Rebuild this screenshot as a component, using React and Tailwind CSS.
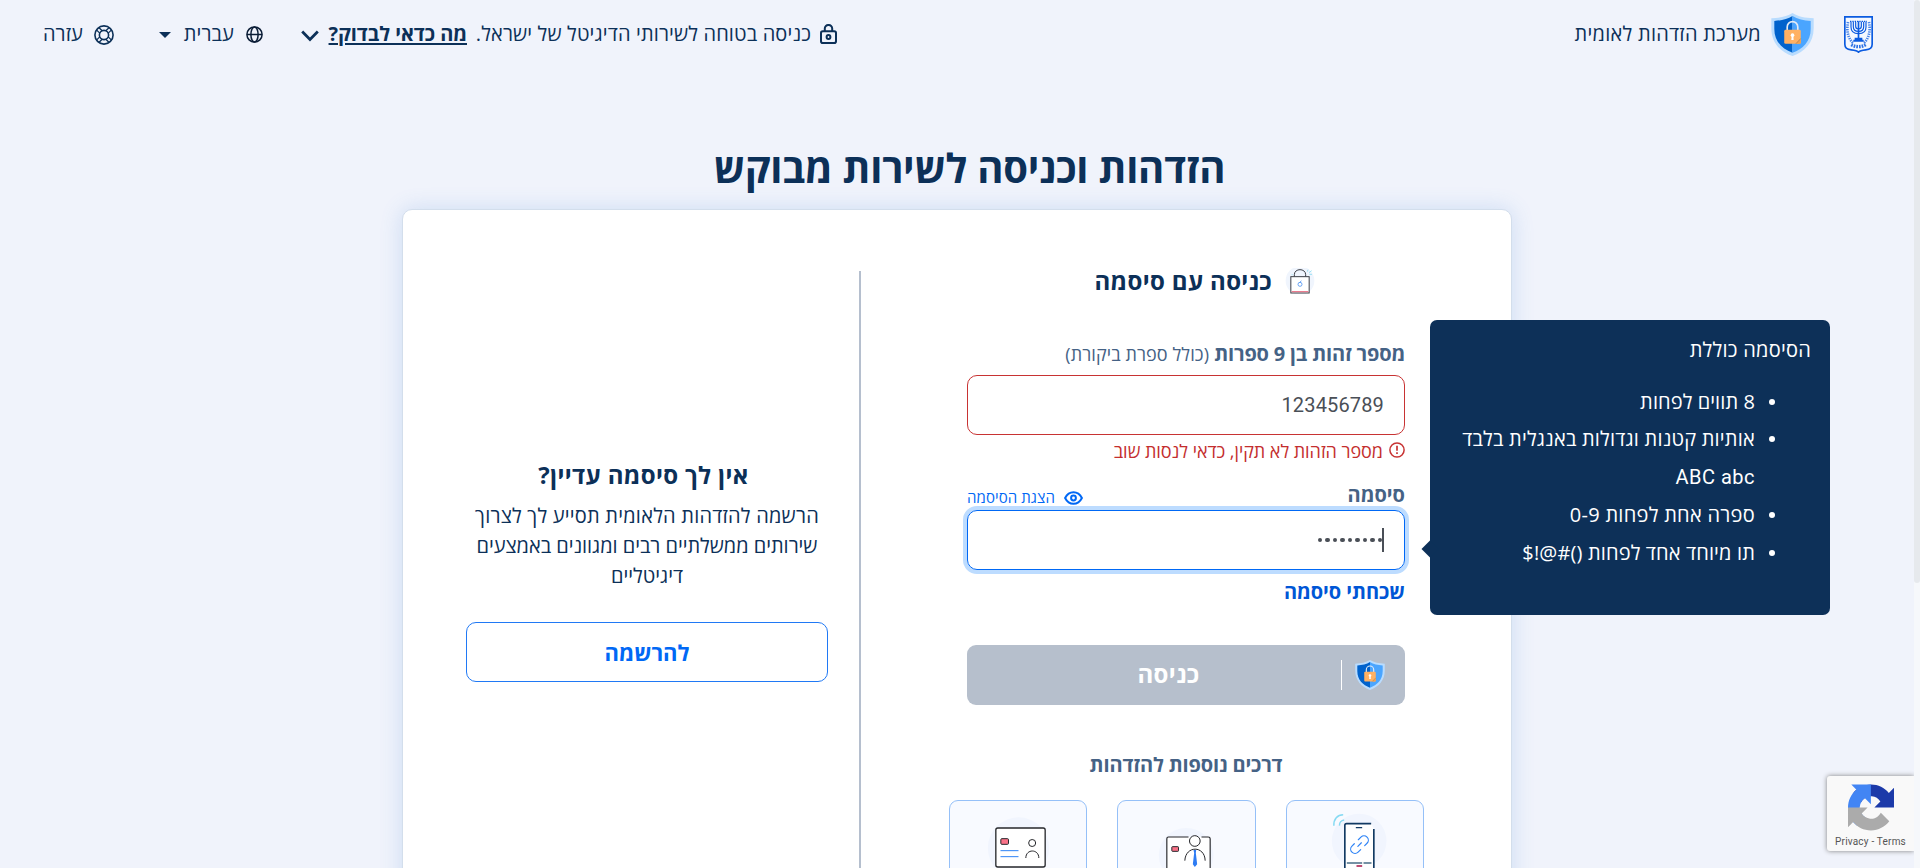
import React from 'react';

function Shield({ className }) {
  return (
    <svg className={className} viewBox="0 0 130 130">
      <path d="M65 0C48 11 26 15 1 16v30c0 44 28 72 64 84 36-12 64-40 64-84V16C104 15 82 11 65 0z" fill="#b9dcfe" />
      <path d="M65 9C50 18 31 23 10 24v24c0 38 24 61 55 72z" fill="#0062cc" />
      <path d="M65 9c15 9 34 14 55 15v24c0 38-24 61-55 72z" fill="#4aa5ff" />
      <path d="M49 52V42a16 16 0 0 1 32 0v10" fill="none" stroke="#e3ebf5" strokeWidth="5" />
      <rect x="40" y="51" width="50" height="42" rx="4" fill="#ffb163" />
      <path d="M90 77v12a4 4 0 0 1-4 4H74z" fill="#f0a050" />
      <path d="M75 93 90 77" stroke="#7d6a55" strokeWidth="1.4" />
      <circle cx="65" cy="67" r="5.5" fill="#fff" />
      <path d="M62.500 68h5l1 14h-7z" fill="#fff" />
    </svg>
  );
}

function Emblem() {
  return (
    <svg className="h-[37px] w-[29px]" viewBox="0 0 87 111" fill="none" stroke="#0b5be0">
      <path d="M2.500 2.500h82v82c0 10-8 16-19 17-9 1-18 2-22 7-4-5-13-6-22-7-11-1-19-7-19-17z" strokeWidth="5" fill="#f5f8fe" />
      <path d="M43.500 16v50" strokeWidth="5" />
      <path d="M35 17v14c0 5 3 8 8.500 8S52 36 52 31V17M28 17v15c0 9 6 14 15.500 14S59 41 59 32V17M21 17v16c0 13 9 20 22.500 20S66 46 66 33V17" strokeWidth="3.500" />
      <path d="M18 16h51" strokeWidth="3.500" strokeDasharray="4 3" />
      <path d="M32 68h23M28 74h31" strokeWidth="6" />
      <path d="M12 18c-4 22-3 46 16 64M75 18c4 22 3 46-16 64" strokeWidth="8" strokeDasharray="4 3" opacity=".75" />
      <path d="M22 86c12 8 31 8 43 0" strokeWidth="10" strokeDasharray="5 3" opacity=".85" />
    </svg>
  );
}

function LockIcon() {
  return (
    <svg className="h-5 w-[17px]" viewBox="0 0 17 20" fill="none" stroke="#0c3058" strokeWidth="2">
      <rect x="1" y="7.200" width="15" height="11.800" rx="1.800" />
      <path d="M4.800 7V4.500A3.500 3.500 0 0 1 8.500 1a3.500 3.500 0 0 1 3.700 3.500V7" />
      <circle cx="8.500" cy="13" r="1.900" />
    </svg>
  );
}

function GlobeIcon() {
  return (
    <svg className="h-[17px] w-[17px]" viewBox="0 0 17 17" fill="none" stroke="#0b1d36" strokeWidth="1.500">
      <circle cx="8.500" cy="8.500" r="7.600" />
      <ellipse cx="8.500" cy="8.500" rx="3.600" ry="7.600" />
      <path d="M1 8.500h15" />
    </svg>
  );
}

function LifebuoyIcon() {
  return (
    <svg className="h-5 w-5" viewBox="0 0 20 20" fill="none" stroke="#0c3058" strokeWidth="1.600">
      <circle cx="10" cy="10" r="9.100" />
      <circle cx="10" cy="10" r="4.600" />
      <path d="M8.300 5.700V1M11.700 5.700V1M8.300 14.300V19M11.700 14.300V19M5.700 8.300H1M5.700 11.700H1M14.300 8.300H19M14.300 11.700H19" strokeWidth="1.300" transform="rotate(45 10 10)" />
    </svg>
  );
}

function BagLock() {
  return (
    <svg className="h-[26px] w-[30px]" viewBox="1034 80 90 78" fill="none">
      <circle cx="1079" cy="118" r="43" fill="#f0f5fd" />
      <path d="M1062 106v-6c0-20 34-20 34 0v6" stroke="#3a3d45" strokeWidth="3" />
      <rect x="1051.500" y="106" width="55" height="49" fill="#fff" stroke="#3a3d45" strokeWidth="3" />
      <path d="M1054 151h50" stroke="#e8637a" strokeWidth="3" />
      <circle cx="1079" cy="129" r="6" stroke="#4f94f2" strokeWidth="2.500" />
      <path d="M1078 124l5-6" stroke="#4f94f2" strokeWidth="2.500" />
      <path d="M1101 91l2-6M1106 94l8-6M1107 99h8M1054 100h3" stroke="#8adcf2" strokeWidth="2.500" />
    </svg>
  );
}

function IdCardDrawing() {
  return (
    <svg className="h-[67px] w-full" viewBox="61 183 406 201" fill="none">
      <circle cx="265" cy="324" r="92" fill="#f1f5fe" />
      <rect x="197" y="264" width="148" height="117" rx="6" fill="#fff" stroke="#26272b" strokeWidth="4" />
      <rect x="212" y="296" width="23" height="17" rx="3" fill="#fa7288" stroke="#26272b" strokeWidth="3" />
      <path d="M211 332h54M211 350h54" stroke="#2e83f6" strokeWidth="3" />
      <circle cx="306" cy="309" r="10.500" stroke="#26272b" strokeWidth="3" />
      <path d="M287 354c0-28 39-28 39 0" stroke="#26272b" strokeWidth="3" />
    </svg>
  );
}

function EmployeeDrawing() {
  return (
    <svg className="h-[67px] w-full" viewBox="565 183 406 201" fill="none">
      <circle cx="768" cy="346" r="82" fill="#f1f5fe" />
      <path d="M710 400V296q0-5 5-5h119q6 0 6 5v104z" fill="#fff" />
      <path d="M710 400V296q0-5 5-5h60M814 291h20q6 0 6 5v104" stroke="#26272b" strokeWidth="3.500" />
      <rect x="725" y="320" width="20" height="14" rx="2" fill="#fa7288" stroke="#26272b" strokeWidth="3" />
      <circle cx="794" cy="303" r="16" fill="#fff" stroke="#26272b" strokeWidth="3" />
      <path d="M764 362c2-46 60-46 61 0" stroke="#26272b" strokeWidth="3" />
      <path d="M790 330h8l-1 9 4 34-7 8-6-8 4-34z" fill="#2e7cf3" />
    </svg>
  );
}

function PhoneDrawing() {
  return (
    <svg className="h-[67px] w-full" viewBox="1069 183 406 201" fill="none">
      <circle cx="1284" cy="303" r="82" fill="#f1f5fe" />
      <path d="M1241 400V251h80l7 16v133z" fill="#fff" />
      <path d="M1241 400V256q0-5 5-5h74M1328 267v133" stroke="#123a63" strokeWidth="5" />
      <path d="M1274 263h19" stroke="#123a63" strokeWidth="4" />
      <path d="M1247 369h46M1297 369h24" stroke="#486d86" strokeWidth="4" />
      <path d="M1276 378h17" stroke="#bd4d73" strokeWidth="6" />
      <path d="M1208 257c-1-20 11-33 28-33M1225 257c-1-10 6-16 14-17" stroke="#86daf3" strokeWidth="4.500" />
      <g stroke="#2e83f6" strokeWidth="3.500" strokeLinecap="round" transform="rotate(-45 1285 314)">
        <path d="M1277 327h-11a13 13 0 0 1 0-26h10M1293 301h11a13 13 0 0 1 0 26h-10M1278 314h15" />
      </g>
    </svg>
  );
}

function RecaptchaLogo() {
  return (
    <svg className="h-[47px] w-[46px]" viewBox="0 0 64 64">
      <path fill="#1C3AA9" d="M64 31.955l-.033-1.37V4.687l-7.16 7.16C50.948 4.674 42.033.093 32.05.093c-10.4 0-19.622 4.96-25.458 12.64l11.736 11.86a15.55 15.55 0 0 1 4.754-5.334c2.05-1.6 4.952-2.906 8.968-2.906.485 0 .86.057 1.135.163 4.976.393 9.288 3.14 11.828 7.124l-8.307 8.307L64 31.953" />
      <path fill="#4285F4" d="M31.862.094l-1.37.033H4.594l7.16 7.16C4.58 13.147 0 22.06 0 32.046c0 10.4 4.96 19.622 12.64 25.458L24.5 45.768a15.55 15.55 0 0 1-5.334-4.754c-1.6-2.05-2.906-4.952-2.906-8.968 0-.485.057-.86.163-1.135.393-4.976 3.14-9.288 7.124-11.828l8.307 8.307L31.86.095" />
      <path fill="#ABABAB" d="M.001 32.045l.033 1.37v25.898l7.16-7.16c5.86 7.173 14.774 11.754 24.76 11.754 10.4 0 19.622-4.96 25.458-12.64l-11.736-11.86a15.55 15.55 0 0 1-4.754 5.334c-2.05 1.6-4.952 2.906-8.968 2.906-.485 0-.86-.057-1.135-.163-4.976-.393-9.288-3.14-11.828-7.124l8.307-8.307c-10.522.04-22.4.066-27.295-.005" />
    </svg>
  );
}

function Header() {
  return (
    <header className="flex h-[68px] items-center justify-between pr-[41px] pl-[41px] text-[20px] leading-[30px] whitespace-nowrap text-[#0c3058]">
      <div className="flex items-center">
        <div className="mt-px"><Emblem /></div>
        <Shield className="mt-px mr-[30px] h-[43px] w-[43px]" />
        <span className="mr-[10px] tracking-[0.25px]">מערכת הזדהות לאומית</span>
      </div>
      <div className="flex items-center">
        <LockIcon />
        <span className="mr-[9px] w-[336px] tracking-[0.14px]">כניסה בטוחה לשירותי הדיגיטל של ישראל.</span>
        <a className="mr-[8px] w-[139px] font-bold tracking-[-0.05px] underline decoration-2 underline-offset-[2px]">מה כדאי לבדוק?</a>
        <svg className="mt-1 mr-[9px] h-3 w-[18px]" viewBox="0 0 18 12" fill="none" stroke="#0c3058" strokeWidth="2.800">
          <path d="M1.200 1.600 9 9.400l7.800-7.800" />
        </svg>
        <div className="mt-px mr-[38px]"><GlobeIcon /></div>
        <span className="mr-[12px] w-[51px] tracking-[0.1px]">עברית</span>
        <svg className="mt-px mr-[12px] h-[6px] w-[12px]" viewBox="0 0 12 6">
          <path d="M0 0h12L6 6z" fill="#0c3058" />
        </svg>
        <div className="mt-px mr-[45px]"><LifebuoyIcon /></div>
        <span className="mr-[11px] w-[42px] tracking-[0.1px]">עזרה</span>
      </div>
    </header>
  );
}

function Bullet() {
  return <i className="mt-[16px] -mr-5 ml-[14px] h-[6px] w-[6px] shrink-0 rounded-full bg-white" />;
}

function PasswordTooltip() {
  return (
    <aside className="absolute top-[-190px] left-[463px] h-[295px] w-[400px] rounded-[7px] bg-[#0d3058] pt-[15px] pr-[19px] text-[20px] whitespace-nowrap text-white">
      <div className="absolute top-[223px] left-[-6px] h-3 w-3 rotate-45 bg-[#0d3058]" />
      <p className="leading-[30px] tracking-[0.25px]">הסיסמה כוללת</p>
      <ul className="mt-[17.500px] pr-14 leading-[37.5px]">
        <li className="flex"><Bullet /><span className="tracking-[0.08px]">8 תווים לפחות</span></li>
        <li className="flex">
          <Bullet />
          <span><span className="tracking-[0.2px]">אותיות קטנות וגדולות באנגלית בלבד</span><br /><span className="font-[Roboto] tracking-[0.5px]">ABC abc</span></span>
        </li>
        <li className="flex"><Bullet /><span className="tracking-[0.28px]">ספרה אחת לפחות 0-9</span></li>
        <li className="flex"><Bullet /><span className="tracking-[0.14px]">תו מיוחד אחד לפחות ()#@!$</span></li>
      </ul>
    </aside>
  );
}

function MethodTile({ children }) {
  return <div className="h-[140px] overflow-hidden rounded-[9px] border border-[#95c0f8] bg-[#f8faff]">{children}</div>;
}

function LoginForm() {
  return (
    <section className="w-[475px] pt-14">
      <div className="mr-[19px] ml-[18px]">
        <h2 className="flex h-[30px] items-center pr-[90px] text-[24px] leading-[30px] font-bold tracking-[0.35px] whitespace-nowrap text-[#0c3058]">
          <BagLock />
          <span className="mr-[13px]">כניסה עם סיסמה</span>
        </h2>
        <label className="mt-[43px] block text-[20px] leading-[30px] whitespace-nowrap text-[#456285]">
          <span className="font-bold tracking-[-0.18px]">מספר זהות בן 9 ספרות</span>{' '}
          <span className="text-[18px] tracking-[0.1px]">(כולל ספרת ביקורת)</span>
        </label>
        <div className="mt-[6px] flex h-[60px] items-center rounded-[10px] border border-[#c83333] px-5 font-[Roboto] text-[20px] tracking-[0.15px] text-[#4a4f57]">
          <span dir="ltr">123456789</span>
        </div>
        <p className="mt-1 flex h-6 items-center text-[18px] leading-6 tracking-[-0.04px] text-[#c42e2e]">
          <svg className="mt-[-2px] h-4 w-4" viewBox="0 0 16 16" fill="none" stroke="#c83333" strokeWidth="1.500">
            <circle cx="8" cy="8" r="7.100" />
            <path d="M8 3.800v5M8 10.300v1.700" strokeWidth="1.700" />
          </svg>
          <span className="mr-[6px]">מספר הזהות לא תקין, כדאי לנסות שוב</span>
        </p>
        <div className="mt-[17px] flex h-[30px] items-center justify-between leading-[30px]">
          <span className="text-[20px] font-bold text-[#456285]">סיסמה</span>
          <span className="flex items-center text-[15px] text-[#0068f5]">
            <svg className="mt-[5px] h-[14px] w-[19px]" viewBox="0 0 19 14" fill="none" stroke="#0068f5" strokeWidth="2">
              <path d="M1.100 7C3 3.200 6 1.200 9.500 1.200S16 3.200 17.900 7c-1.900 3.800-4.900 5.800-8.400 5.800S3 10.800 1.100 7z" />
              <circle cx="9.500" cy="7" r="2.400" />
            </svg>
            <span className="mt-[3px] mr-[9px] tracking-[0.08px]">הצגת הסיסמה</span>
          </span>
        </div>
        <div className="relative">
          <div className="flex h-[60px] items-center rounded-[10px] border border-[#0068f5] px-5 ring-4 ring-[#bddcff]">
            <div className="flex items-center gap-[3px]">
              <i className="h-6 w-[2px] bg-[#4a4f57]" />
              {Array.from({ length: 9 }, (_, i) => (
                <i key={i} className="h-[4.500px] w-[4.500px] rounded-full bg-[#4a4f57] nth-[2]:-mr-[3px]" />
              ))}
            </div>
          </div>
          <PasswordTooltip />
        </div>
        <a className="mt-[7px] block text-[20px] leading-[30px] font-bold tracking-[-0.05px] text-[#0056d6]">שכחתי סיסמה</a>
        <button className="mt-[38px] flex h-[60px] w-full items-center rounded-[9px] bg-[#b6bfcc] pr-5 text-[24px] leading-[30px] font-bold text-white">
          <Shield className="h-[30px] w-[30px]" />
          <span className="mr-[13px] h-[30px] w-px bg-white" />
          <span className="mb-[2px] ml-[29px] flex-1 text-center tracking-[0.4px]">כניסה</span>
        </button>
        <h3 className="mt-[45px] text-center text-[20px] leading-[30px] font-bold tracking-[-0.15px] text-[#456285]">דרכים נוספות להזדהות</h3>
      </div>
      <div className="mt-[20px] grid grid-cols-3 gap-[30px]">
        <MethodTile><PhoneDrawing /></MethodTile>
        <MethodTile><EmployeeDrawing /></MethodTile>
        <MethodTile><IdCardDrawing /></MethodTile>
      </div>
    </section>
  );
}

function RegisterPanel() {
  return (
    <section className="mr-[31px] w-[362px] pt-[247px] text-center text-[20px] whitespace-nowrap text-[#0c3058]">
      <h2 className="pr-[7px] text-[24px] leading-9 font-bold tracking-[0.35px]">אין לך סיסמה עדיין?</h2>
      <p className="mt-[8px] leading-[30px]">
        <span className="tracking-[0.22px]">הרשמה להזדהות הלאומית תסייע לך לצרוך</span><br />
        <span className="tracking-[-0.04px]">שירותים ממשלתיים רבים ומגוונים באמצעים</span><br />
        דיגיטליים
      </p>
      <button className="mt-[31px] h-[60px] w-full rounded-[10px] border border-[#2079f5] text-[22px] font-bold text-[#0068f5]">להרשמה</button>
    </section>
  );
}

export default function App() {
  return (
    <div dir="rtl" className="relative h-[868px] w-full overflow-hidden bg-[#f0f3fb] pr-[6px] font-['Open_Sans',sans-serif]">
      <Header />
      <main className="flex flex-col items-center">
        <h1 className="mt-[76px] pl-[25px] text-[40px] leading-[48px] font-bold tracking-[-0.25px] text-[#0c3058]">הזדהות וכניסה לשירות מבוקש</h1>
        <div className="mt-[17px] flex h-[760px] w-[1110px] rounded-[10px] border border-[#d3deec] bg-white pr-[87px] shadow-[0_0_22px_rgba(60,130,215,0.2)]">
          <LoginForm />
          <div className="mt-[61px] mr-[88px] w-[2px] bg-[#b5bfce]" />
          <RegisterPanel />
        </div>
      </main>
      <div className="absolute top-[776px] right-[6px] flex h-[75px] w-[87px] flex-col items-center rounded-l-[3px] bg-[#f9f9f9] pt-2 shadow-[0_0_5px_gray]">
        <RecaptchaLogo />
        <span dir="ltr" className="mt-[4px] font-[Roboto] text-[10px] leading-[14px] tracking-[0.2px] text-[#555]">Privacy - Terms</span>
      </div>
      <div className="absolute top-0 right-0 h-full w-[6px] bg-[#f6f8fb]">
        <div className="h-[583px] rounded-full bg-[#e6e9ed]" />
      </div>
    </div>
  );
}
